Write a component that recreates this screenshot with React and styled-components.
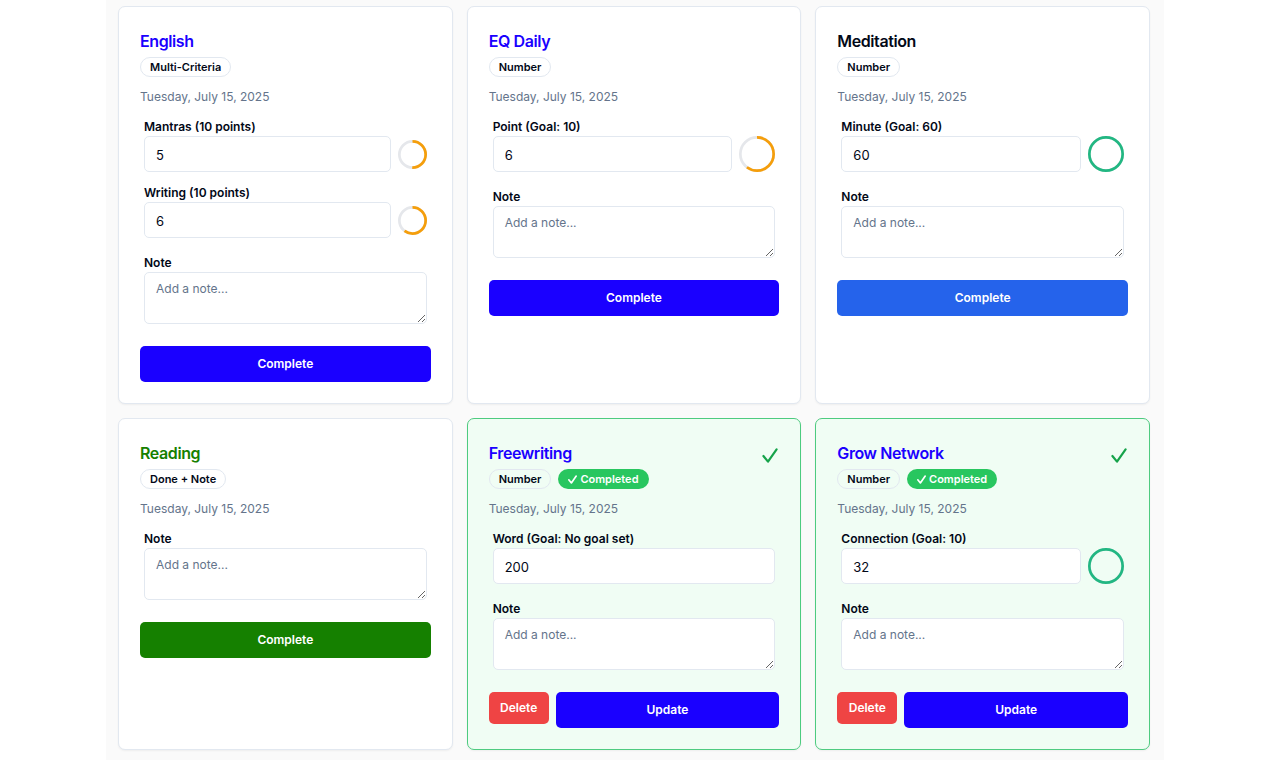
import React, { useId } from "react";
import styled, { createGlobalStyle } from "styled-components";

const GlobalStyle = createGlobalStyle`
  *, *::before, *::after { box-sizing: border-box; }
  body {
    margin: 0;
    background: #ffffff;
    color: #020817;
    font-family: Inter, "Liberation Sans", sans-serif;
    font-size: 12px;
    line-height: 20px;
  }
  h3, p { margin: 0; }
  button, input, textarea { font: inherit; }
`;

const Page = styled.main`
  max-width: 1058px;
  min-height: 100vh;
  margin: 0 auto;
  padding: 6px 14px 10px 12px;
  background: #fafafa;
`;

const Grid = styled.div`
  display: grid;
  grid-template-columns: repeat(3, minmax(0, 1fr));
  gap: 14px;
`;

const Card = styled.article`
  padding: 21px;
  border: 1px solid ${(p) => (p.$done ? "#4ecb80" : "#e2e8f0")};
  border-radius: 7px;
  background: ${(p) => (p.$done ? "#f0fdf4" : "#ffffff")};
  box-shadow: 0 1px 2px rgba(0, 0, 0, 0.05);
`;

const Header = styled.header`
  display: flex;
  justify-content: space-between;
  align-items: flex-start;
`;

const Title = styled.h3`
  color: ${(p) => p.$color};
  font-size: 16px;
  font-weight: 600;
  line-height: 26px;
  letter-spacing: -0.025em;
`;

const Badges = styled.div`
  display: flex;
  gap: 7px;
  margin-top: 3px;
`;

const Badge = styled.span`
  display: inline-flex;
  align-items: center;
  gap: 3px;
  height: 20px;
  padding: 0 9px;
  border: 1px solid ${(p) => (p.$solid ? "transparent" : "#e2e8f0")};
  border-radius: 10px;
  background: ${(p) => (p.$solid ? "#28c65f" : "transparent")};
  color: ${(p) => (p.$solid ? "#ffffff" : "#020817")};
  font-size: 11px;
  font-weight: 600;
  line-height: 18px;
`;

const DateLine = styled.p`
  margin-top: 10px;
  color: #64748b;
`;

const Fields = styled.div`
  display: flex;
  flex-direction: column;
  gap: 16px;
  margin-top: 11px;
  padding: 0 4px;
`;

const Criteria = styled.div`
  display: flex;
  flex-direction: column;
  gap: 12px;
`;

const Label = styled.label`
  display: block;
  font-weight: 600;
  line-height: 18px;
`;

const InputRow = styled.div`
  display: flex;
  align-items: center;
  gap: 7px;
`;

const Input = styled.input`
  flex: 1;
  min-width: 0;
  height: 36px;
  padding: 2px 11px 0;
  border: 1px solid #e2e8f0;
  border-radius: 5px;
  background: #ffffff;
  color: #020817;
  font-size: 13px;
`;

const Textarea = styled.textarea`
  display: block;
  width: 100%;
  height: 52px;
  padding: 7px 11px;
  border: 1px solid #e2e8f0;
  border-radius: 5px;
  background: #ffffff;
  color: #020817;
  line-height: 18px;
  resize: vertical;
  &::placeholder { color: #64748b; }
`;

const Actions = styled.div`
  display: flex;
  align-items: flex-start;
  gap: 7px;
  margin-top: 22px;
`;

const Button = styled.button`
  flex: 1;
  height: 36px;
  padding: 0 14px;
  border: 0;
  border-radius: 5px;
  background: ${(p) => p.$color};
  color: #ffffff;
  font-weight: 600;
  cursor: pointer;
`;

const DeleteButton = styled(Button)`
  flex: none;
  width: 60px;
  height: 32px;
  padding: 0;
`;

const DoneMark = styled.span`
  display: flex;
  padding: 8px 1px 0 0;
  color: #16a34a;
`;

const RingSvg = styled.svg`
  flex: none;
  display: block;
`;

function Check({ width, height, stroke }) {
  return (
    <svg width={width} height={height} viewBox="0 0 16 15" fill="none" aria-hidden="true">
      <path
        d="M1.4 8 L6 13.6 L14.6 1.4"
        stroke="currentColor"
        strokeWidth={stroke}
        strokeLinecap="round"
        strokeLinejoin="round"
      />
    </svg>
  );
}

function Ring({ value, goal, size, box }) {
  const share = Math.min(value / goal, 1);
  const radius = (box - 3) / 2;
  const turn = 2 * Math.PI * radius;
  const mid = box / 2;
  return (
    <RingSvg width={size} height={size} viewBox={`0 0 ${box} ${box}`} fill="none" aria-hidden="true">
      <circle cx={mid} cy={mid} r={radius} stroke="#e5e7eb" strokeWidth="3" />
      <circle
        cx={mid}
        cy={mid}
        r={radius}
        stroke={share === 1 ? "#22b782" : "#f59e0b"}
        strokeWidth="3"
        strokeDasharray={`${turn * share} ${turn}`}
        transform={`rotate(-90 ${mid} ${mid})`}
      />
    </RingSvg>
  );
}

function NumberField({ label, value, goal, small }) {
  const id = useId();
  return (
    <div>
      <Label htmlFor={id}>{label}</Label>
      <InputRow>
        <Input id={id} type="number" defaultValue={value} />
        {goal && <Ring value={value} goal={goal} size={small ? 29 : 36} box={small ? 32 : 40} />}
      </InputRow>
    </div>
  );
}

function NoteField() {
  const id = useId();
  return (
    <div>
      <Label htmlFor={id}>Note</Label>
      <Textarea id={id} placeholder="Add a note..." />
    </div>
  );
}

function HabitCard({ title, color, buttonColor, kind, fields, done }) {
  return (
    <Card $done={done}>
      <Header>
        <div>
          <Title $color={color}>{title}</Title>
          <Badges>
            <Badge>{kind}</Badge>
            {done && (
              <Badge $solid>
                <Check width={9} height={9} stroke={3} />
                Completed
              </Badge>
            )}
          </Badges>
        </div>
        {done && (
          <DoneMark>
            <Check width={16} height={15} stroke={2.2} />
          </DoneMark>
        )}
      </Header>
      <DateLine>Tuesday, July 15, 2025</DateLine>
      <Fields>
        {fields.length > 0 && (
          <Criteria>
            {fields.map((field) => (
              <NumberField key={field.label} {...field} small={fields.length > 1} />
            ))}
          </Criteria>
        )}
        <NoteField />
      </Fields>
      <Actions>
        {done && (
          <DeleteButton type="button" $color="#ef4444">
            Delete
          </DeleteButton>
        )}
        <Button type="button" $color={buttonColor || color}>
          {done ? "Update" : "Complete"}
        </Button>
      </Actions>
    </Card>
  );
}

const BLUE = "#1a00ff";

const habits = [
  {
    title: "English",
    color: BLUE,
    kind: "Multi-Criteria",
    fields: [
      { label: "Mantras (10 points)", value: 5, goal: 10 },
      { label: "Writing (10 points)", value: 6, goal: 10 },
    ],
  },
  {
    title: "EQ Daily",
    color: BLUE,
    kind: "Number",
    fields: [{ label: "Point (Goal: 10)", value: 6, goal: 10 }],
  },
  {
    title: "Meditation",
    color: "#020817",
    buttonColor: "#2563eb",
    kind: "Number",
    fields: [{ label: "Minute (Goal: 60)", value: 60, goal: 60 }],
  },
  { title: "Reading", color: "#158000", kind: "Done + Note", fields: [] },
  {
    title: "Freewriting",
    color: BLUE,
    kind: "Number",
    done: true,
    fields: [{ label: "Word (Goal: No goal set)", value: 200 }],
  },
  {
    title: "Grow Network",
    color: BLUE,
    kind: "Number",
    done: true,
    fields: [{ label: "Connection (Goal: 10)", value: 32, goal: 10 }],
  },
];

export default function App() {
  return (
    <>
      <GlobalStyle />
      <Page>
        <Grid>
          {habits.map((habit) => (
            <HabitCard key={habit.title} {...habit} />
          ))}
        </Grid>
      </Page>
    </>
  );
}
